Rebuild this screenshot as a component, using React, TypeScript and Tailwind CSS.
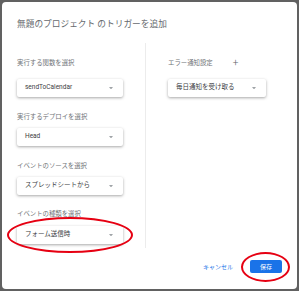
import React from 'react';

function Caret() {
  return (
    <svg width="4" height="2.5" viewBox="0 0 4 2.5" className="shrink-0">
      <path d="M0 0h4L2 2.5z" fill="#a0a4a8" />
    </svg>
  );
}

function Select({ value, width }: { value: string; width: string }) {
  return (
    <div
      className={`${width} h-[18px] flex items-center justify-between pl-[8px] pr-[10px] bg-white rounded-[2px] shadow-[0_1px_3px_rgba(0,0,0,0.35)] text-[6.5px] text-[#3c4043]`}
    >
      <span>{value}</span>
      <Caret />
    </div>
  );
}

function Label({ text, className = '' }: { text: string; className?: string }) {
  return <div className={`h-[10px] leading-[10px] text-[6.4px] text-[#6f7377] ${className}`}>{text}</div>;
}

export default function App() {
  return (
    <div className="w-[300px] h-[292px] bg-white font-['Roboto','Noto_Sans_CJK_JP',sans-serif]">
      <div className="relative w-[299px] h-[291px] bg-[#616161] p-[2px]">
        <div className="flex flex-col w-full h-full bg-white rounded-[4px]">
          <h1 className="pt-[16px] pl-[15px] text-[8.7px] leading-[12px] text-[#666a6e]">
            無題のプロジェクト のトリガーを追加
          </h1>

          <div className="flex mt-[13px] h-[205px]">
            <div className="w-[143px] pl-[15px] pt-[15px]">
              <Label text="実行する関数を選択" />
              <div className="mt-[11px]">
                <Select value="sendToCalendar" width="w-[106px]" />
              </div>
              <Label text="実行するデプロイを選択" className="mt-[15px]" />
              <div className="mt-[6px]">
                <Select value="Head" width="w-[106px]" />
              </div>
              <Label text="イベントのソースを選択" className="mt-[15px]" />
              <div className="mt-[6px]">
                <Select value="スプレッドシートから" width="w-[106px]" />
              </div>
              <Label text="イベントの種類を選択" className="mt-[14px]" />
              <div className="mt-[7px]">
                <Select value="フォーム送信時" width="w-[106px]" />
              </div>
            </div>

            <div className="w-px bg-[#ececec]" />

            <div className="pl-[22px] pt-[15px]">
              <div className="flex items-center h-[10px]">
                <Label text="エラー通知設定" />
                <span className="ml-[20px] text-[10px] leading-[10px] text-[#5f6368] font-light">+</span>
              </div>
              <div className="mt-[11px]">
                <Select value="毎日通知を受け取る" width="w-[98px]" />
              </div>
            </div>
          </div>

          <div className="flex justify-end items-center mt-[12px] pr-[15px]">
            <button className="text-[6px] text-[#1a73e8]">キャンセル</button>
            <button className="ml-[17px] w-[32px] h-[13px] rounded-[2px] bg-[#1a73e8] text-white text-[6px]">
              保存
            </button>
          </div>
        </div>

        <div className="absolute left-[7px] top-[217px] w-[126px] h-[36px] rounded-[50%] border-[2.5px] border-[#e60012]" />
        <div className="absolute left-[241px] top-[252px] w-[49px] h-[30px] rounded-[50%] border-[2.5px] border-[#e60012]" />
      </div>
    </div>
  );
}
